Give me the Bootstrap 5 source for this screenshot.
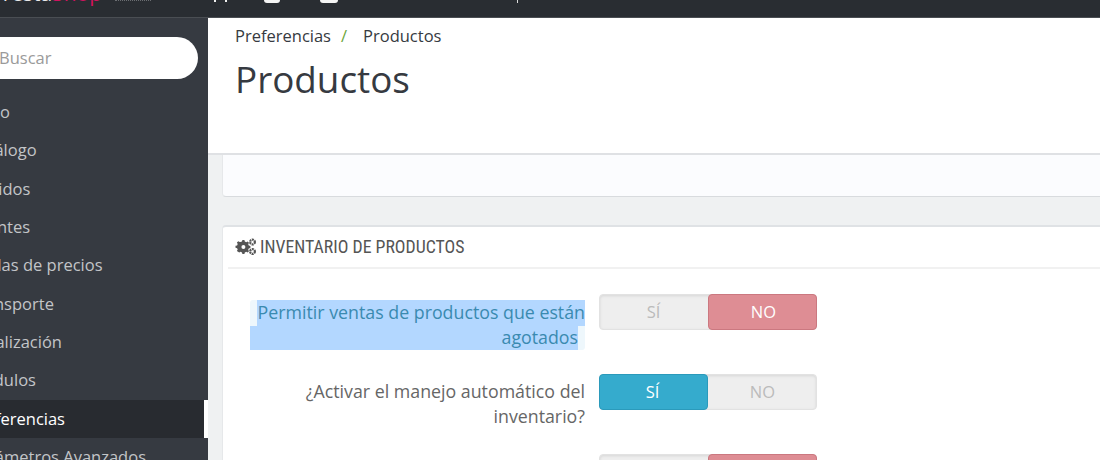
<!DOCTYPE html>
<html lang="es">
<head>
<meta charset="utf-8">
<title>Productos</title>
<link href="https://cdn.jsdelivr.net/npm/bootstrap@5.3.0/dist/css/bootstrap.min.css" rel="stylesheet">
<style>
html,body{height:460px;overflow:hidden}
body{font-family:"Open Sans",sans-serif;background:#eff1f2;color:#363a41;font-size:16.5px}
.topbar{height:18px;background:#292d32;border-bottom:1px solid #4a4e53;overflow:hidden}
.brand{font-size:21px;line-height:20px;margin:-17px 0 0 -10px;color:#e8e9ea;width:125px;flex:none}
.brand b{color:#d1135f;font-weight:400}
.frag-faint{width:36px;height:1px;border-top:1px dotted #6b6e72;flex:none}
.frag-dot{width:2px;height:2px;background:#f0f0f0;flex:none;margin-left:63px}
.frag-dot2{margin-left:9px}
.frag-box{height:3px;background:#f4f4f4;border-radius:0 0 3px 3px;flex:none}
.fb1{width:16px;margin-left:37px}
.fb2{width:18px;margin-left:40px}
.frag-tick{width:1px;height:3px;background:#ddd;margin-left:179px;flex:none}
.side{width:208px;background:#363a41;height:442px;overflow:hidden}
.searchwrap{padding:19px 10px 0 0}
.searchbox{height:42px;background:#fff;border-radius:0 21px 21px 0;color:#9a9a9a;line-height:42px;font-size:16.5px;text-indent:-1px}
.menu{margin-top:14px;margin-left:-31px;width:239px}
.menu a{display:block;height:38.35px;line-height:38.35px;color:#c3c5c8;text-decoration:none;white-space:nowrap;font-size:16.5px}
.menu a.active-item{background:#282b30;color:#fff;border-right:4px solid #fff}
.pagehead{height:137px;background:#fff;border-bottom:2px solid #dfe1e4;padding:7px 0 0 27px}
.crumbs{font-size:16.5px;line-height:21px;color:#363a41}
.crumbs i{color:#6ba53a;font-style:normal;margin:0 16px 0 10px}
.pagetitle{font-size:36.8px;line-height:48px;margin:9px 0 0;font-weight:400;color:#363a41}
.content{padding:0 0 0 14px;overflow:hidden;height:305px}
.panelA{height:42px;background:#fbfcfe;border-bottom:1px solid #d8dbde;border-left:1px solid #e6e8ea;border-radius:0 0 0 4px;margin-right:-6px}
.panelB{margin-top:28px;background:#fff;border-top:2px solid #dfe2e5;border-left:1px solid #e6e8ea;border-radius:4px 0 0 0;margin-right:-6px;padding:0 0 0 5px;height:300px}
.secthead{height:42px;line-height:39px;border-bottom:2px solid #f1f1f1;font-family:"Liberation Sans Narrow","Roboto Condensed","Liberation Sans",sans-serif;font-size:17.8px;color:#555;padding-left:7px;white-space:nowrap}
.secthead svg{vertical-align:-3px;margin-right:3px}
.formrow{height:80px;padding-top:25px;gap:14px}
.lbl{width:335px;margin-left:22px;text-align:right;color:#666;line-height:25px;font-size:17.8px;padding-top:5px;flex:none}
.lbl-tip{background:#eef7fc;color:#3a8ab0;border-radius:3px;padding-top:0;margin-top:6px;height:50px}
.sel1{display:block;background:#b3d7ff;margin-left:7px;height:26px;line-height:24px;white-space:nowrap}
.sel2{display:block;background:#b3d7ff;margin-right:7px;height:24px;line-height:22px}
.sw{width:218px;height:36px;background:#eee;border:1px solid #e2e2e2;border-radius:4px;box-shadow:inset 0 1px 3px rgba(0,0,0,.1)}
.sw span{flex:1 1 50%;text-align:center;line-height:34px;color:#bbb;font-size:16.5px}
.sw span:first-child{padding-right:2px}
.sw span:last-child{padding-left:2px}
.sw .on-no{background:#de8d94;border:1px solid #cb7880;color:#fff;border-radius:4px;margin:-1px;line-height:34px;padding-left:0}
.sw .on-si{background:#35abcd;border:1px solid #2b9abb;color:#fff;border-radius:4px;margin:-1px;line-height:34px}
</style>
</head>
<body>
<div class="topbar d-flex align-items-start">
  <div class="brand">Presta<b>Shop</b></div>
  <div class="frag-faint"></div>
  <div class="frag-dot"></div>
  <div class="frag-dot frag-dot2"></div>
  <div class="frag-box fb1"></div>
  <div class="frag-box fb2"></div>
  <div class="frag-tick"></div>
</div>
<div class="d-flex">
  <aside class="side flex-shrink-0">
    <div class="searchwrap"><div class="searchbox">Buscar</div></div>
    <nav class="menu">
      <a href="#">Inicio</a>
      <a href="#">Catálogo</a>
      <a href="#">Pedidos</a>
      <a href="#">Clientes</a>
      <a href="#">Reglas de precios</a>
      <a href="#">Transporte</a>
      <a href="#">Localización</a>
      <a href="#">Módulos</a>
      <a href="#" class="active-item">Preferencias</a>
      <a href="#">Parámetros Avanzados</a>
    </nav>
  </aside>
  <main class="flex-grow-1">
    <div class="pagehead">
      <div class="crumbs">Preferencias<i>/</i>Productos</div>
      <h1 class="pagetitle">Productos</h1>
    </div>
    <div class="content">
      <div class="panelA"></div>
      <section class="panelB">
        <div class="secthead"><svg width="22" height="18" viewBox="0 0 22 18" fill="#555"><path fill-rule="evenodd" d="M7.5 4l1.5-.4.4-1.6h2l.4 1.6 1.4.6 1.4-.8 1.4 1.4-.8 1.4.6 1.4 1.6.4v2l-1.6.4-.6 1.4.8 1.4-1.4 1.4-1.4-.8-1.4.6-.4 1.6h-2l-.4-1.6-1.4-.6-1.4.8L3.9 13l.8-1.4-.6-1.4-1.6-.4v-2l1.6-.4.6-1.4-.8-1.4 1.4-1.4 1.4.8zM10.4 7a2 2 0 100 4 2 2 0 000-4z" transform="translate(-2 0)"/><circle cx="17.5" cy="4" r="2.4" fill="none" stroke="#555" stroke-width="2.2" stroke-dasharray="1.8 .6"/><circle cx="17.5" cy="13.5" r="2.4" fill="none" stroke="#555" stroke-width="2.2" stroke-dasharray="1.8 .6"/></svg>INVENTARIO DE PRODUCTOS</div>
        <div class="formrow d-flex">
          <div class="lbl lbl-tip"><span class="sel1">Permitir ventas de productos que están</span><span class="sel2">agotados</span></div>
          <div class="sw d-flex"><span>SÍ</span><span class="on-no">NO</span></div>
        </div>
        <div class="formrow d-flex">
          <div class="lbl">¿Activar el manejo automático del inventario?</div>
          <div class="sw d-flex"><span class="on-si">SÍ</span><span>NO</span></div>
        </div>
        <div class="formrow d-flex">
          <div class="lbl lbl-tip"></div>
          <div class="sw d-flex"><span>SÍ</span><span class="on-no">NO</span></div>
        </div>
      </section>
    </div>
  </main>
</div>
</body>
</html>
